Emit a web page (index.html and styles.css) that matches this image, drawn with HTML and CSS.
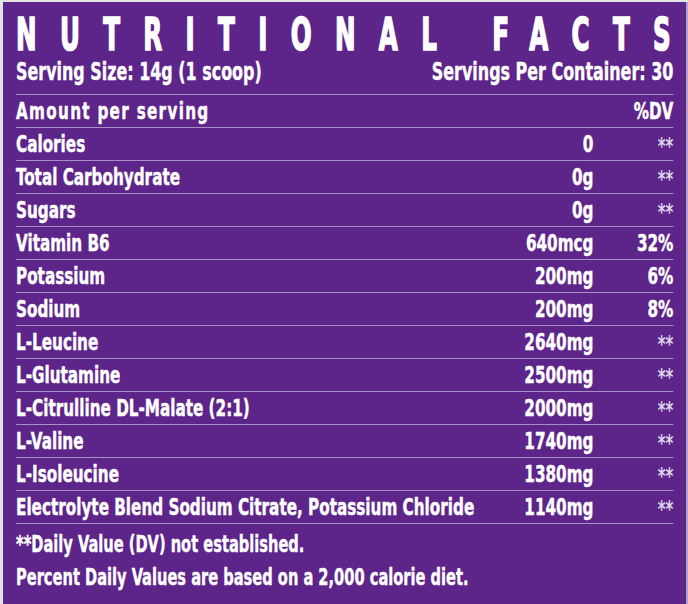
FILE: index.html
```html
<!DOCTYPE html>
<html>
<head>
<meta charset="utf-8">
<link rel="stylesheet" href="styles.css">
</head>
<body>
<div class="label">
  <h1 class="title">NUTRITIONAL FACT<span class="last">S</span></h1>
  <div class="content">
    <div class="serving">
      <span>Serving Size: 14g (1 scoop)</span>
      <span>Servings Per Container: 30</span>
    </div>
    <div class="facts">
      <div class="row head"><span class="name">Amount per serving</span><span class="amt"></span><span class="dv">%DV</span></div>
      <div class="row"><span class="name">Calories</span><span class="amt">0</span><span class="dv star">**</span></div>
      <div class="row"><span class="name">Total Carbohydrate</span><span class="amt">0g</span><span class="dv star">**</span></div>
      <div class="row"><span class="name">Sugars</span><span class="amt">0g</span><span class="dv star">**</span></div>
      <div class="row"><span class="name">Vitamin B6</span><span class="amt">640mcg</span><span class="dv">32%</span></div>
      <div class="row"><span class="name">Potassium</span><span class="amt">200mg</span><span class="dv">6%</span></div>
      <div class="row"><span class="name">Sodium</span><span class="amt">200mg</span><span class="dv">8%</span></div>
      <div class="row"><span class="name">L-Leucine</span><span class="amt">2640mg</span><span class="dv star">**</span></div>
      <div class="row"><span class="name">L-Glutamine</span><span class="amt">2500mg</span><span class="dv star">**</span></div>
      <div class="row"><span class="name">L-Citrulline DL-Malate (2:1)</span><span class="amt">2000mg</span><span class="dv star">**</span></div>
      <div class="row"><span class="name">L-Valine</span><span class="amt">1740mg</span><span class="dv star">**</span></div>
      <div class="row"><span class="name">L-Isoleucine</span><span class="amt">1380mg</span><span class="dv star">**</span></div>
      <div class="row"><span class="name">Electrolyte Blend Sodium Citrate, Potassium Chloride</span><span class="amt">1140mg</span><span class="dv star">**</span></div>
    </div>
    <p class="note first">**Daily Value (DV) not established.</p>
    <p class="note">Percent Daily Values are based on a 2,000 calorie diet.</p>
  </div>
</div>
</body>
</html>
```

FILE: styles.css
```css
html, body {
  margin: 0;
  padding: 0;
}
body {
  background: #e4e4e4;
  width: 688px;
  height: 604px;
  overflow: hidden;
}
.label {
  margin: 2px 0 0 3px;
  width: 685px;
  height: 602px;
  box-sizing: border-box;
  border-right: 2px solid #b3a0c9;
  background: #5d2489;
  color: #ffffff;
  font-family: "DejaVu Sans Condensed", "DejaVu Sans", sans-serif;
  font-weight: bold;
  padding: 11px 0 0 13px;
  overflow: hidden;
}
.title {
  margin: 0;
  font-size: 44px;
  line-height: 44px;
  letter-spacing: 37.7px;
  white-space: nowrap;
  font-weight: bold;
  -webkit-text-stroke: 1.6px #ffffff;
  transform: scaleX(0.62);
  transform-origin: 0 0;
}
.title .last {
  letter-spacing: 0;
}
.content {
  width: 913px;
  transform: scaleX(0.72);
  transform-origin: 0 0;
}
.serving {
  display: flex;
  justify-content: space-between;
  font-size: 24.6px;
  line-height: 30px;
  padding-bottom: 7px;
  white-space: nowrap;
  -webkit-text-stroke: 0.4px #ffffff;
}
.facts {
  display: flex;
  flex-direction: column;
}
.row {
  display: grid;
  grid-template-columns: 1fr auto 111px;
  align-items: center;
  height: 33px;
  box-sizing: border-box;
  border-top: 1px solid #a88fc5;
  font-size: 23.5px;
  line-height: 32px;
  white-space: nowrap;
  -webkit-text-stroke: 0.45px #ffffff;
}
.row.head .name {
  letter-spacing: 1.8px;
}
.row:last-child {
  border-bottom: 1px solid #a88fc5;
  height: 34px;
}
.amt {
  text-align: right;
}
.dv {
  text-align: right;
}
.star {
  align-self: start;
  font-size: 23px;
  line-height: 22px;
  padding-top: 7px;
  color: #ddd4e9;
  -webkit-text-stroke: 0;
}
.note {
  margin: 0;
  font-size: 22.6px;
  line-height: 33px;
  white-space: nowrap;
  -webkit-text-stroke: 0.4px #ffffff;
}
.note.first {
  margin-top: 4px;
}
```
